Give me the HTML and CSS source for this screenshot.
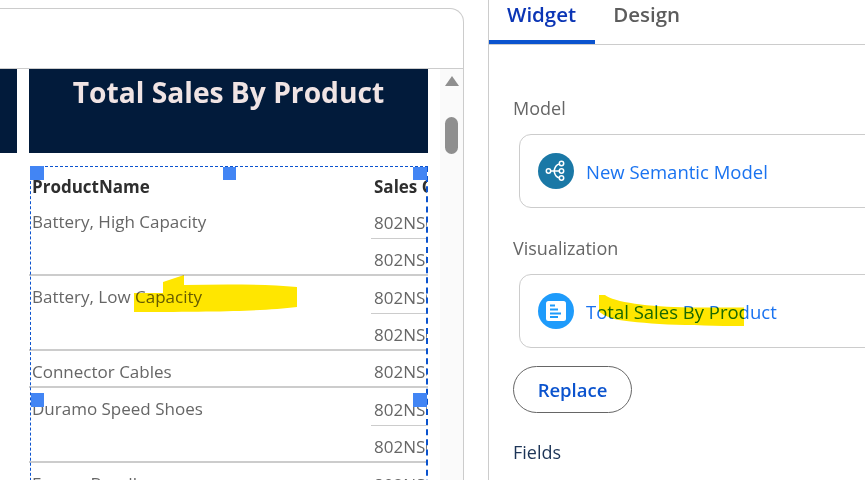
FILE: index.html
```html
<!DOCTYPE html>
<html lang="en">
<head>
    <meta charset="UTF-8">
    <meta name="viewport" content="width=device-width, initial-scale=1.0">
    <title>Widget editor</title>
    <link rel="stylesheet" href="styles.css">
</head>
<body>
    <div class="page">
        <section class="report-panel">
            <div class="panel-head"></div>
            <div class="panel-body">
                <div class="report">
                    <div class="banners">
                        <div class="banner banner-cut"></div>
                        <div class="banner banner-main">Total Sales By Product</div>
                    </div>
                    <div class="table-wrap">
                        <table class="sales-table">
                            <tr class="head-row">
                                <th class="col-name">ProductName</th>
                                <th><span class="clip">Sales Order</span></th>
                            </tr>
                            <tr class="h36">
                                <td class="name row-end" rowspan="2">Battery, High Capacity</td>
                                <td class="sales sub"><span class="clip">802NS0001</span></td>
                            </tr>
                            <tr class="h37">
                                <td class="sales row-end"><span class="clip">802NS0002</span></td>
                            </tr>
                            <tr class="h38">
                                <td class="name row-end" rowspan="2">Battery, Low Capacity</td>
                                <td class="sales sub"><span class="clip">802NS0003</span></td>
                            </tr>
                            <tr class="h37">
                                <td class="sales row-end"><span class="clip">802NS0004</span></td>
                            </tr>
                            <tr class="h37">
                                <td class="name row-end">Connector Cables</td>
                                <td class="sales row-end"><span class="clip">802NS0005</span></td>
                            </tr>
                            <tr class="h38">
                                <td class="name row-end" rowspan="2">Duramo Speed Shoes</td>
                                <td class="sales sub"><span class="clip">802NS0006</span></td>
                            </tr>
                            <tr class="h37">
                                <td class="sales row-end"><span class="clip">802NS0007</span></td>
                            </tr>
                            <tr class="h38">
                                <td class="name">Energy Bundle</td>
                                <td class="sales"><span class="clip">802NS0008</span></td>
                            </tr>
                        </table>
                        <div class="select-box">
                            <span class="handle h-tl"></span>
                            <span class="handle h-tc"></span>
                            <span class="handle h-tr"></span>
                            <span class="handle h-ml"></span>
                            <span class="handle h-mr"></span>
                        </div>
                    </div>
                </div>
                <div class="scrollbar">
                    <span class="scroll-arrow"></span>
                    <span class="scroll-thumb"></span>
                </div>
            </div>
        </section>

        <aside class="side-panel">
            <nav class="tabs">
                <a class="tab tab-active">Widget</a>
                <a class="tab">Design</a>
            </nav>
            <div class="side-body">
                <div class="field-label label-model">Model</div>
                <div class="pick-card">
                    <svg class="pick-icon" viewBox="0 0 36 36">
                        <circle cx="18" cy="18" r="18" fill="#1a78a6"/>
                        <g fill="none" stroke="#fff" stroke-width="1.5">
                            <path d="M12.5 18H21M16 18c1-4 2-6.500 6-7M16 18c1 4 2 6.500 6 7"/>
                            <circle cx="10.500" cy="18" r="2.200"/>
                            <circle cx="23.500" cy="10.500" r="2.200"/>
                            <circle cx="23.500" cy="18" r="2.200"/>
                            <circle cx="23.500" cy="25" r="2.200"/>
                        </g>
                    </svg>
                    <span class="pick-text">New Semantic Model</span>
                </div>
                <div class="field-label label-vis">Visualization</div>
                <div class="pick-card">
                    <svg class="pick-icon" viewBox="0 0 36 36">
                        <circle cx="18" cy="18" r="18" fill="#1e9bfb"/>
                        <rect x="8" y="8" width="20" height="20" rx="2.500" fill="#fff"/>
                        <g stroke="#1e9bfb" stroke-width="2">
                            <path d="M12 12.500h5M12 16.500h8M12 20.500h11M12 24h8"/>
                        </g>
                    </svg>
                    <span class="pick-text">Total Sales By Product</span>
                </div>
                <button class="replace-btn">Replace</button>
                <div class="field-label label-fields">Fields</div>
            </div>
        </aside>

        <svg class="marker marker-one" viewBox="0 0 163 37">
            <path d="M0 37V18H29V7L50 0V10C90 9 130 9 163 12V32C130 36 90 37 0 37Z"/>
        </svg>
        <svg class="marker marker-two" viewBox="0 0 145 31">
            <path d="M0 0H6C14 7 50 12 90 12.500H145V31C90 31 40 29 15 24C6 21 1 18 0 16Z"/>
        </svg>
    </div>
</body>
</html>
```

FILE: styles.css
```css
* {
    box-sizing: border-box;
}
html, body {
    margin: 0;
    height: 100%;
    overflow: hidden;
    background-color: #ffffff;
}
body {
    font-family: "Open Sans", "Noto Sans", Arial, sans-serif;
    color: #333333;
}
.page {
    position: relative;
    display: flex;
    width: 865px;
    height: 480px;
    overflow: hidden;
}

/* left report panel */
.report-panel {
    width: 464px;
    height: 472px;
    margin-top: 8px;
    border: 1px solid #cccccc;
    border-left: none;
    border-bottom: none;
    border-top-right-radius: 14px;
    overflow: hidden;
}
.panel-head {
    height: 60px;
    border-bottom: 1px solid #cccccc;
}
.panel-body {
    display: flex;
    height: 411px;
}
.report {
    width: 440px;
    overflow: hidden;
}
.banners {
    display: flex;
    gap: 12px;
    height: 84px;
}
.banner {
    background-color: #021b3b;
}
.banner-cut {
    width: 17px;
}
.banner-main {
    width: 399px;
    padding-top: 4px;
    text-align: center;
    font-size: 28.200px;
    font-weight: 700;
    line-height: 38px;
    color: #f0e4e4;
}
.table-wrap {
    position: relative;
    width: 399px;
    height: 320px;
    margin: 13px 0 0 29px;
    overflow: hidden;
}
.sales-table {
    width: 399px;
    table-layout: fixed;
    border-collapse: separate;
    border-spacing: 0;
    font-size: 17px;
}
.sales-table th {
    height: 37px;
    padding: 4px 0 0 3px;
    text-align: left;
    font-weight: 700;
    color: #2e2e2e;
}
.col-name {
    width: 342px;
}
.h36 {
    height: 36px;
}
.h37 {
    height: 37px;
}
.h38 {
    height: 38px;
}
.sales-table td {
    padding: 5px 0 0 3px;
    color: #666666;
}
.sales-table .h36 td {
    padding-top: 3px;
}
.sales-table td.name {
    vertical-align: top;
    padding-top: 9px;
}
.sales-table .h36 td.name {
    padding-top: 7px;
}
.sales-table td.sub {
    border-bottom: 1px solid #cccccc;
}
.sales-table td.row-end {
    border-bottom: 2px solid #cccccc;
}
.clip {
    display: block;
    width: 53px;
    overflow: hidden;
    white-space: nowrap;
}
.select-box {
    position: absolute;
    left: 1px;
    top: 0;
    width: 398px;
    height: 340px;
    border: 1px dashed #0b53ce;
    border-right: 2px dashed #0b53ce;
}
.handle {
    position: absolute;
    width: 13px;
    height: 13px;
    background-color: #4285f4;
}
.h-tl {
    left: -1px;
    top: -1px;
    width: 14px;
    height: 14px;
}
.h-tc {
    left: 192px;
    top: 0;
}
.h-tr {
    right: -1px;
    top: 0;
    width: 14px;
}
.h-ml {
    left: 0;
    top: 226px;
    height: 14px;
}
.h-mr {
    right: -1px;
    top: 226px;
    width: 14px;
    height: 14px;
}
.scrollbar {
    position: relative;
    flex: 1;
    background-color: #fafafa;
    display: flex;
    flex-direction: column;
    align-items: center;
}
.scroll-arrow {
    width: 0;
    height: 0;
    margin-top: 7px;
    border-left: 7px solid transparent;
    border-right: 7px solid transparent;
    border-bottom: 10px solid #8f8f8f;
}
.scroll-thumb {
    width: 13px;
    height: 37px;
    margin-top: 31px;
    border-radius: 7px;
    background-color: #8f8f8f;
}

/* right side panel */
.side-panel {
    width: 377px;
    margin-left: 24px;
    flex: none;
    border-left: 1px solid #cccccc;
}
.tabs {
    display: flex;
    height: 45px;
    border-bottom: 1px solid #cccccc;
}
.tab {
    height: 44px;
    padding: 0 18px;
    font-size: 20.500px;
    font-weight: 600;
    line-height: 28px;
    color: #5c5c5c;
}
.tab-active {
    padding-right: 19px;
    color: #0b35b5;
    border-bottom: 4px solid #0b53ce;
}
.side-body {
    padding-left: 24px;
}
.field-label {
    font-size: 18px;
    line-height: 26px;
    color: #666666;
}
.label-model {
    margin-top: 50px;
}
.label-vis {
    margin-top: 27px;
}
.label-fields {
    margin-top: 26px;
    color: #1d3557;
}
.pick-card {
    display: flex;
    align-items: center;
    gap: 12px;
    width: 400px;
    height: 74px;
    margin: 13px 0 0 6px;
    padding-left: 18px;
    border: 1px solid #cccccc;
    border-radius: 12px;
}
.pick-icon {
    width: 36px;
    height: 36px;
    flex: none;
}
.pick-text {
    font-size: 18.500px;
    color: #1a73f0;
    white-space: nowrap;
}
.replace-btn {
    display: block;
    width: 119px;
    height: 47px;
    margin-top: 18px;
    padding: 0;
    border: 1px solid #666666;
    border-radius: 24px;
    background-color: #ffffff;
    font-family: inherit;
    font-size: 18.500px;
    font-weight: 600;
    color: #0b53ce;
}

/* yellow highlighter marks drawn over the screenshot */
.marker {
    position: absolute;
    mix-blend-mode: multiply;
}
.marker path {
    fill: #ffe600;
}
.marker-one {
    left: 134px;
    top: 275px;
    width: 163px;
    height: 37px;
}
.marker-two {
    left: 599px;
    top: 295px;
    width: 145px;
    height: 31px;
}
```
